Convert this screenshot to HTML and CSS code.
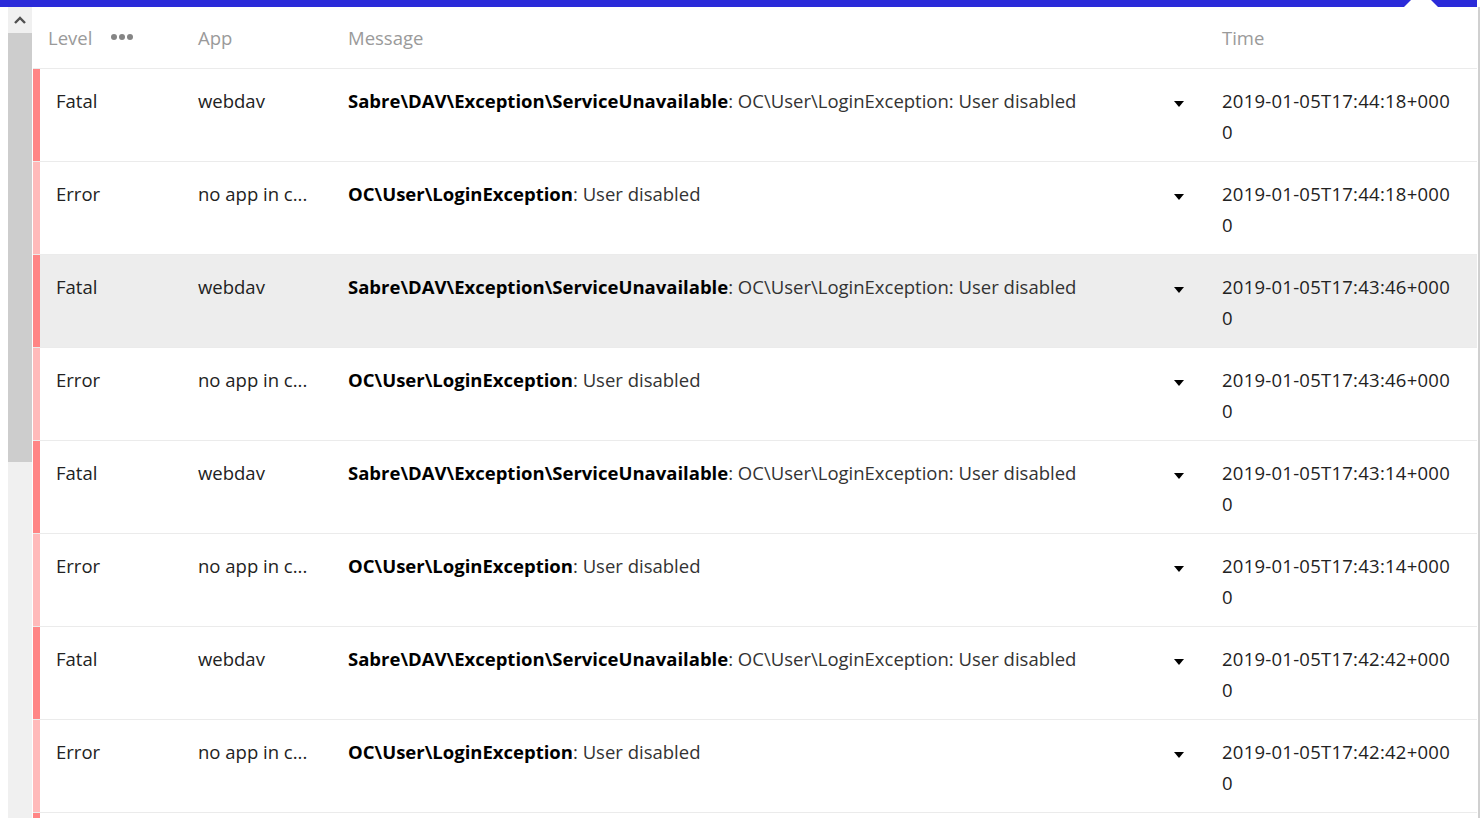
FILE: index.html
```html
<!DOCTYPE html>
<html>
<head>
<meta charset="utf-8">
<link rel="stylesheet" href="styles.css">
</head>
<body>
<div class="topbar"><span class="notch"></span></div>
<div class="main">
  <div class="gutter"></div>
  <div class="scrollbar">
    <div class="sb-btn">
      <svg width="12" height="8" viewBox="0 0 12 8"><path d="M1 7 L6 2 L11 7" fill="none" stroke="#505050" stroke-width="2.4"/></svg>
    </div>
    <div class="sb-thumb"></div>
  </div>
  <div class="sep"></div>
  <div class="table">
    <div class="head">
      <div class="c-level">Level <span class="dots"><i></i><i></i><i></i></span></div>
      <div class="c-app">App</div>
      <div class="c-msg">Message</div>
      <div class="c-arrow"></div>
      <div class="c-time">Time</div>
    </div>

    <div class="row">
      <div class="c-level fatal">Fatal</div>
      <div class="c-app">webdav</div>
      <div class="c-msg"><b>Sabre\DAV\Exception\ServiceUnavailable</b>: OC\User\LoginException: User disabled</div>
      <div class="c-arrow"><span class="tri"></span></div>
      <div class="c-time">2019-01-05T17:44:18+0000</div>
    </div>
    <div class="row">
      <div class="c-level error">Error</div>
      <div class="c-app">no app in c...</div>
      <div class="c-msg"><b>OC\User\LoginException</b>: User disabled</div>
      <div class="c-arrow"><span class="tri"></span></div>
      <div class="c-time">2019-01-05T17:44:18+0000</div>
    </div>
    <div class="row hover">
      <div class="c-level fatal">Fatal</div>
      <div class="c-app">webdav</div>
      <div class="c-msg"><b>Sabre\DAV\Exception\ServiceUnavailable</b>: OC\User\LoginException: User disabled</div>
      <div class="c-arrow"><span class="tri"></span></div>
      <div class="c-time">2019-01-05T17:43:46+0000</div>
    </div>
    <div class="row">
      <div class="c-level error">Error</div>
      <div class="c-app">no app in c...</div>
      <div class="c-msg"><b>OC\User\LoginException</b>: User disabled</div>
      <div class="c-arrow"><span class="tri"></span></div>
      <div class="c-time">2019-01-05T17:43:46+0000</div>
    </div>
    <div class="row">
      <div class="c-level fatal">Fatal</div>
      <div class="c-app">webdav</div>
      <div class="c-msg"><b>Sabre\DAV\Exception\ServiceUnavailable</b>: OC\User\LoginException: User disabled</div>
      <div class="c-arrow"><span class="tri"></span></div>
      <div class="c-time">2019-01-05T17:43:14+0000</div>
    </div>
    <div class="row">
      <div class="c-level error">Error</div>
      <div class="c-app">no app in c...</div>
      <div class="c-msg"><b>OC\User\LoginException</b>: User disabled</div>
      <div class="c-arrow"><span class="tri"></span></div>
      <div class="c-time">2019-01-05T17:43:14+0000</div>
    </div>
    <div class="row">
      <div class="c-level fatal">Fatal</div>
      <div class="c-app">webdav</div>
      <div class="c-msg"><b>Sabre\DAV\Exception\ServiceUnavailable</b>: OC\User\LoginException: User disabled</div>
      <div class="c-arrow"><span class="tri"></span></div>
      <div class="c-time">2019-01-05T17:42:42+0000</div>
    </div>
    <div class="row">
      <div class="c-level error">Error</div>
      <div class="c-app">no app in c...</div>
      <div class="c-msg"><b>OC\User\LoginException</b>: User disabled</div>
      <div class="c-arrow"><span class="tri"></span></div>
      <div class="c-time">2019-01-05T17:42:42+0000</div>
    </div>
    <div class="row">
      <div class="c-level fatal"></div>
    </div>
  </div>
  <div class="rightedge"></div>
</div>
</body>
</html>
```

FILE: styles.css
```css
html, body {
  margin: 0;
  padding: 0;
  height: 818px;
  overflow: hidden;
  background: #fff;
  font-family: "Open Sans", "Liberation Sans", sans-serif;
  font-size: 18.5px;
  color: #222;
}
.topbar {
  position: relative;
  width: 1477px;
  height: 7px;
  background: #2b2bd9;
  overflow: hidden;
}
.notch {
  position: absolute;
  left: 1404px;
  top: -10px;
  width: 0;
  height: 0;
  border-left: 17px solid transparent;
  border-right: 17px solid transparent;
  border-bottom: 17px solid #fff;
}
.main {
  display: flex;
  height: 811px;
}
.gutter { width: 8px; flex: none; }
.scrollbar {
  width: 24px;
  flex: none;
  background: #f0f0f0;
  display: flex;
  flex-direction: column;
}
.sb-btn {
  height: 26px;
  display: flex;
  align-items: center;
  justify-content: center;
}
.sb-btn svg { display: block; margin-top: -1px; }
.sb-thumb {
  height: 429px;
  background: #cdcdcd;
}
.sep { width: 1px; flex: none; }
.table {
  width: 1444px;
  flex: none;
  overflow: hidden;
}
.rightedge {
  width: 2px;
  margin-left: 1px;
  background: #d0d0d0;
  flex: none;
}
.head, .row {
  display: flex;
  border-bottom: 1px solid #ebebeb;
}
.head {
  height: 61px;
  align-items: center;
  color: #9a9a9a;
}
.row {
  height: 92px;
  line-height: 31px;
}
.row.hover { background: #ededed; }
.c-level {
  width: 150px;
  flex: none;
  box-sizing: border-box;
  padding-left: 15px;
  display: flex;
  align-items: center;
}
.row .c-level {
  padding: 16px 0 0 16px;
  align-items: flex-start;
  border-left: 7px solid #ff8585;
}
.row .c-level.error { border-left-color: #ffbaba; }
.dots {
  display: flex;
  gap: 2px;
  margin-left: 19px;
  margin-top: -2px;
}
.dots i {
  width: 6px;
  height: 6px;
  border-radius: 50%;
  background: #858585;
}
.c-app {
  width: 150px;
  flex: none;
  box-sizing: border-box;
  padding-left: 15px;
}
.c-msg {
  flex: 1;
  box-sizing: border-box;
  padding-left: 15px;
}
.row .c-msg { color: #333; }
.c-msg b { color: #000; font-weight: 700; }
.c-arrow {
  width: 47px;
  flex: none;
  box-sizing: border-box;
  padding-left: 14px;
}
.tri {
  display: block;
  width: 0;
  height: 0;
  margin-top: 16px;
  border-left: 5.5px solid transparent;
  border-right: 5.5px solid transparent;
  border-top: 6px solid #000;
}
.c-time {
  width: 270px;
  flex: none;
  box-sizing: border-box;
  padding: 0 21px 0 15px;
  word-break: break-all;
}
.row .c-time { letter-spacing: 0.25px; }
.row .c-app, .row .c-msg, .row .c-arrow, .row .c-time {
  padding-top: 16px;
}
```
